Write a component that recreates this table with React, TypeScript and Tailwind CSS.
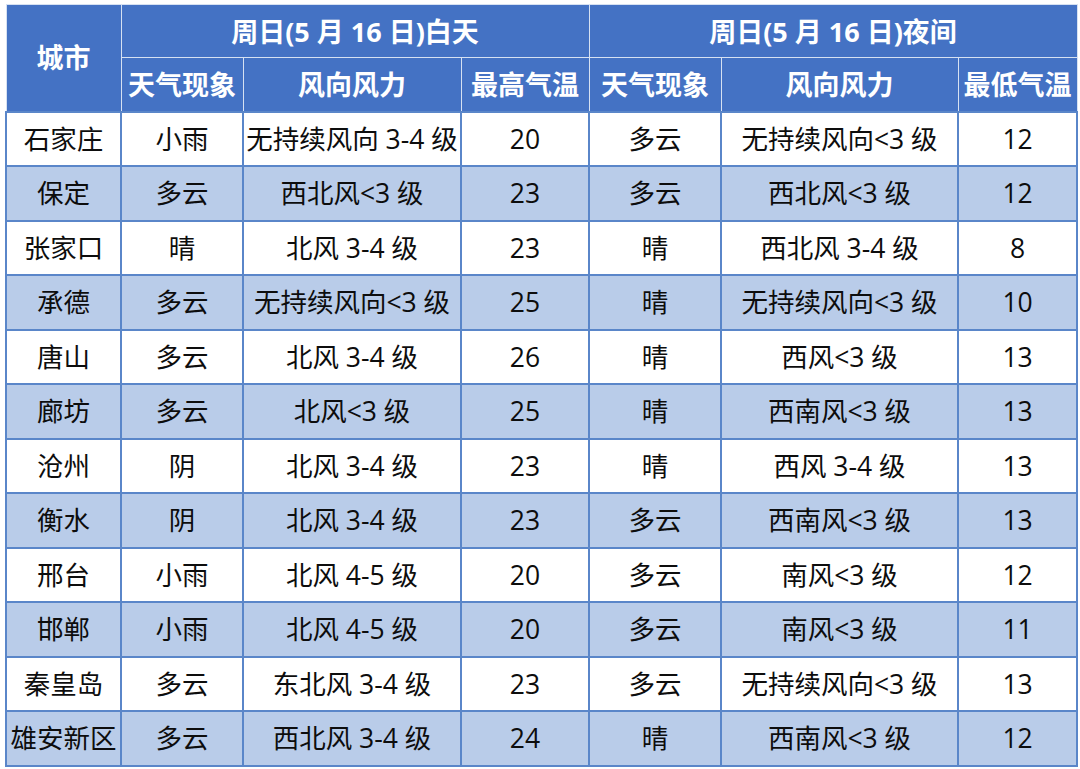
const rows: string[][] = [
  ['石家庄', '小雨', '无持续风向 3-4 级', '20', '多云', '无持续风向<3 级', '12'],
  ['保定', '多云', '西北风<3 级', '23', '多云', '西北风<3 级', '12'],
  ['张家口', '晴', '北风 3-4 级', '23', '晴', '西北风 3-4 级', '8'],
  ['承德', '多云', '无持续风向<3 级', '25', '晴', '无持续风向<3 级', '10'],
  ['唐山', '多云', '北风 3-4 级', '26', '晴', '西风<3 级', '13'],
  ['廊坊', '多云', '北风<3 级', '25', '晴', '西南风<3 级', '13'],
  ['沧州', '阴', '北风 3-4 级', '23', '晴', '西风 3-4 级', '13'],
  ['衡水', '阴', '北风 3-4 级', '23', '多云', '西南风<3 级', '13'],
  ['邢台', '小雨', '北风 4-5 级', '20', '多云', '南风<3 级', '12'],
  ['邯郸', '小雨', '北风 4-5 级', '20', '多云', '南风<3 级', '11'],
  ['秦皇岛', '多云', '东北风 3-4 级', '23', '多云', '无持续风向<3 级', '13'],
  ['雄安新区', '多云', '西北风 3-4 级', '24', '晴', '西南风<3 级', '12'],
];

const widths = [115, 122, 218, 128, 132, 237, 119];
const sub = ['天气现象', '风向风力', '最高气温', '天气现象', '风向风力', '最低气温'];

export default function App() {
  return (
    <div className="w-[1080px] h-[769px] bg-white pl-[5px] pt-[4px]">
      <table
        className="table-fixed border-collapse w-[1071px] text-[26.5px] leading-none text-center text-[#0d0d0d]"
        style={{ fontFamily: '"Open Sans", "Noto Sans CJK SC", sans-serif' }}
      >
        <colgroup>
          {widths.map((w, i) => (
            <col key={i} style={{ width: w }} />
          ))}
        </colgroup>
        <thead className="bg-[#4472c4] text-white text-[27px]">
          <tr className="h-[53px]">
            <th rowSpan={2} className="border border-[#d6e1f2] font-bold">城市</th>
            <th colSpan={3} className="border border-[#d6e1f2] font-bold">周日(5 月 16 日)白天</th>
            <th colSpan={3} className="border border-[#d6e1f2] font-bold">周日(5 月 16 日)夜间</th>
          </tr>
          <tr className="h-[54px]">
            {sub.map((s, i) => (
              <th key={i} className="border border-[#d6e1f2] font-bold whitespace-nowrap">{s}</th>
            ))}
          </tr>
        </thead>
        <tbody>
          {rows.map((r, ri) => (
            <tr key={ri} className={`h-[54.5px] ${ri % 2 === 1 ? 'bg-[#b9cce9]' : 'bg-white'}`}>
              {r.map((c, ci) => (
                <td key={ci} className="border-2 border-[#5a86c9] whitespace-nowrap px-0">{c}</td>
              ))}
            </tr>
          ))}
        </tbody>
      </table>
    </div>
  );
}
